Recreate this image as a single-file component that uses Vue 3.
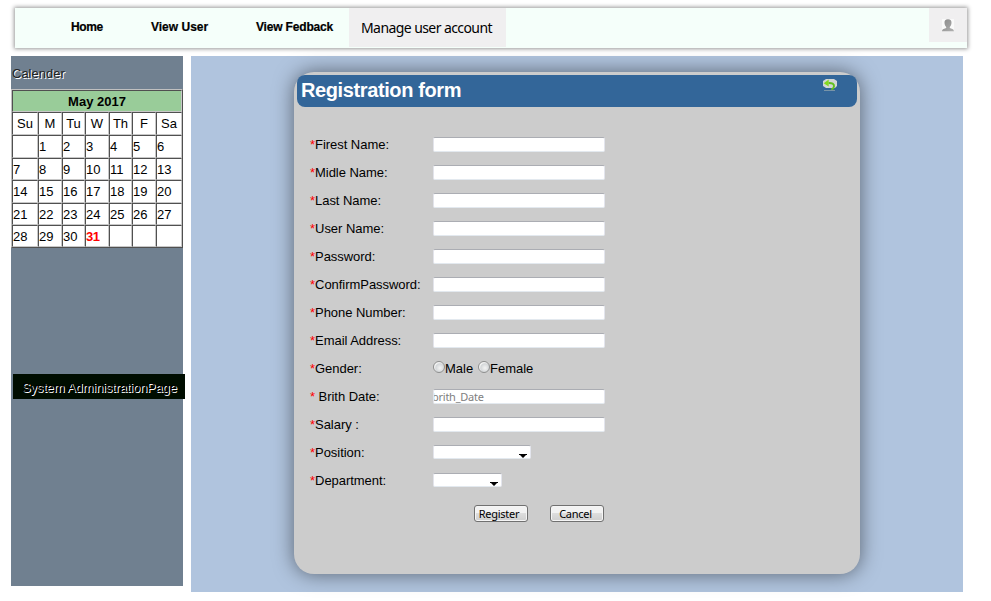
<script setup>
const weekdays = ['Su', 'M', 'Tu', 'W', 'Th', 'F', 'Sa']
const days = ['', ...Array.from({ length: 31 }, (_, i) => i + 1), '', '', '']
const fields = [
  { label: 'Firest Name:', type: 'text' },
  { label: 'Midle Name:', type: 'text' },
  { label: 'Last Name:', type: 'text' },
  { label: 'User Name:', type: 'text' },
  { label: 'Password:', type: 'password' },
  { label: 'ConfirmPassword:', type: 'password' },
  { label: 'Phone Number:', type: 'text' },
  { label: 'Email Address:', type: 'text' },
  { label: 'Gender:', type: 'gender' },
  { label: '\u00a0Brith Date:', type: 'text', placeholder: 'brith_Date' },
  { label: 'Salary :', type: 'text' },
  { label: 'Position:', type: 'select', size: 'wide' },
  { label: 'Department:', type: 'select', size: 'narrow' },
]
</script>

<template>
  <div class="page">
    <nav class="nav">
      <a class="link home">Home</a>
      <a class="link user">View User</a>
      <a class="link feedback">View Fedback</a>
      <a class="active">Manage user account</a>
      <span class="account">
        <svg width="12" height="13" viewBox="0 0 12 13">
          <defs>
            <linearGradient id="person" x1="0" y1="0" x2="1" y2="1">
              <stop offset="0" stop-color="#8a8a8a" />
              <stop offset="1" stop-color="#b0b0b0" />
            </linearGradient>
          </defs>
          <rect width="12" height="12" fill="#fafafa" />
          <path d="M6 .2C8.600.2 9.700 1.900 9.500 4 9.400 6 8.500 7.200 7.800 8v1c1.500.8 4 .8 4.200 3.200H0C.2 9.800 2.700 9.800 4.200 9V8C3.500 7.200 2.600 6 2.500 4 2.300 1.900 3.400.2 6 .2z" fill="url(#person)" />
        </svg>
      </span>
    </nav>

    <div class="columns">
      <aside class="side">
        <div class="side-title">Calender</div>
        <div class="calendar">
          <div class="cell month">May 2017</div>
          <div v-for="d in weekdays" :key="d" class="cell head">{{ d }}</div>
          <div v-for="(d, i) in days" :key="i" class="cell" :class="{ today: d === 31 }">{{ d }}</div>
        </div>
        <div class="role">System AdministrationPage</div>
      </aside>

      <main class="main">
        <form class="card" @submit.prevent>
          <header class="card-head">
            <h1>Registration form</h1>
            <svg class="back" width="14" height="13" viewBox="0 0 14 13">
              <path d="M3 0h8l3 2v5l-2 2H3L0 7V2z" fill="#d2d6d6" />
              <path d="M5.500 4C9 3.800 11.200 5 11 7.200c-.1 1.500-1 2.700-2.700 3.500" fill="none" stroke="#62c01e" stroke-width="2" />
              <path d="M.7 4.200 5.700.5v7z" fill="#84d91f" />
              <path d="M1 11.500h11" stroke="#7894a8" />
            </svg>
          </header>
          <div class="fields">
            <div v-for="f in fields" :key="f.label" class="row">
              <label class="label"><span class="star">*</span>{{ f.label }}</label>
              <div v-if="f.type === 'gender'" class="radios">
                <input type="radio" name="gender" class="radio"><span class="male">Male</span>
                <input type="radio" name="gender" class="radio"><span>Female</span>
              </div>
              <div v-else-if="f.type === 'select'" class="select" :class="f.size">
                <svg width="8" height="4" viewBox="0 0 8 4"><path d="M0 0h8v1H7L4 4 1 1H0z" /></svg>
              </div>
              <input v-else :type="f.type" class="input" :placeholder="f.placeholder">
            </div>
          </div>
          <div class="actions">
            <button class="btn register">Register</button>
            <button class="btn">Cancel</button>
          </div>
        </form>
      </main>
    </div>
  </div>
</template>

<style>
body { background: #fff; overflow: hidden; }
</style>

<style scoped>
* { box-sizing: border-box; }
.page {
  width: 991px;
  height: 601px;
  padding-top: 8px;
  font: 13px/15px "Liberation Sans", Arial, sans-serif;
  color: #000;
}
.nav {
  display: flex;
  align-items: flex-start;
  width: 952px;
  height: 40px;
  margin-left: 15px;
  background: #f5fffa;
  box-shadow: 0 0 4px 1px #999;
}
.link {
  padding-top: 12px;
  font-size: 12px;
  line-height: 14px;
  font-weight: bold;
  white-space: nowrap;
  -webkit-text-stroke: .2px #000;
}
.home { width: 80px; margin-left: 56px; letter-spacing: -.4px; }
.user { width: 105px; }
.feedback { width: 93px; letter-spacing: -.17px; }
.active {
  width: 157px;
  height: 39px;
  padding: 11px 0 0 12px;
  background: #f0eff0;
  font: 14px/18px "Noto Sans", sans-serif;
  letter-spacing: -.58px;
  white-space: nowrap;
}
.account {
  width: 38px;
  height: 34px;
  margin-left: auto;
  padding: 11px 0 0 13px;
  background: #f0eff0;
}
.account svg { display: block; }
.columns {
  display: flex;
  gap: 8px;
  padding: 8px 0 0 11px;
}
.side {
  width: 172px;
  height: 530px;
  background: #708090;
}
.side-title {
  height: 33px;
  padding: 10px 0 0 1px;
  color: #222;
  text-shadow: 1px 1px 0 #fff;
}
.calendar {
  display: grid;
  grid-template-columns: 26px 24px 23px 24px 23px 24px 26px;
  grid-template-rows: 22px 23px 23px 22px 23px 22px 22px;
  width: 172px;
  height: 159px;
  border: 1px solid;
  border-color: #c0c0c0 #505050 #505050 #c0c0c0;
}
.cell {
  padding-top: 3px;
  border: 1px solid;
  border-color: #505050 #c8c8c8 #c8c8c8 #505050;
  background: #fff;
  white-space: nowrap;
}
.month {
  grid-column: 1 / -1;
  background: #9c9;
  font-weight: bold;
  text-align: center;
}
.head { text-align: center; }
.today { color: #f00; font-weight: bold; letter-spacing: -.6px; }
.role {
  width: 172px;
  height: 25px;
  margin: 126px 0 0 2px;
  padding: 6px 0 0 9px;
  background: #000d00;
  color: #000;
  letter-spacing: -.17px;
  text-shadow: 1px 1px 0 #fff;
  white-space: nowrap;
}
.main {
  width: 772px;
  height: 536px;
  padding: 16px 0 0 103px;
  background: #b0c4de;
}
.card {
  width: 566px;
  height: 502px;
  padding: 3px;
  border-radius: 20px;
  background: #ccc;
  box-shadow: 0 0 20px rgba(0, 0, 0, .5);
}
.card-head {
  display: flex;
  justify-content: space-between;
  height: 32px;
  padding: 4px 20px 0 4px;
  border-radius: 8px;
  background: #369;
}
h1 {
  margin: 0;
  color: #fff;
  font-size: 20px;
  line-height: 23px;
  letter-spacing: -.39px;
}
.fields { padding: 23px 0 0 13px; }
.row { display: flex; height: 28px; padding-top: 7px; }
.label { width: 123px; letter-spacing: -.04px; white-space: nowrap; }
.star { color: #f00; }
.input {
  display: block;
  width: 172px;
  height: 15px;
  padding: 0;
  border: 1px solid;
  border-color: #abadb3 #e3e5ed #e3e9ef #e2e3ea;
  border-radius: 2px;
  outline: 0;
  background: #fff;
  font: 11px/13px "Noto Sans", sans-serif;
  letter-spacing: -.25px;
  text-indent: -2px;
}
.input::placeholder { color: #808080; opacity: 1; }
.radios { display: flex; }
.radio {
  appearance: none;
  width: 12px;
  height: 12px;
  margin: 0;
  border: 1px solid #8e8f8f;
  border-radius: 50%;
  background: radial-gradient(circle at 60% 60%, #f4f4f4, #d4d7d9 50%, #f4f4f4 65%);
}
.male { width: 33px; }
.select {
  height: 14px;
  border: 1px solid;
  border-color: #abadb3 #e3e5ed #e3e9ef #e2e3ea;
  border-radius: 2px;
  background: #fff;
  display: flex;
  justify-content: flex-end;
  padding: 8px 3px 0 0;
}
.wide { width: 98px; }
.narrow { width: 69px; }
.select svg { display: block; }
.actions { display: flex; gap: 22px; padding: 11px 0 0 177px; }
.btn {
  width: 54px;
  height: 17px;
  padding: 0 3px 0 0;
  border: 1px solid #707070;
  border-radius: 3px;
  background: linear-gradient(#f2f2f2 0 48%, #ddd 50%, #cfcfcf);
  box-shadow: inset 0 0 0 1px #f5f5f5;
  color: #000;
  font: 11px/15px "Noto Sans", sans-serif;
  letter-spacing: -.25px;
}
.register { padding-right: 4px; }
</style>
